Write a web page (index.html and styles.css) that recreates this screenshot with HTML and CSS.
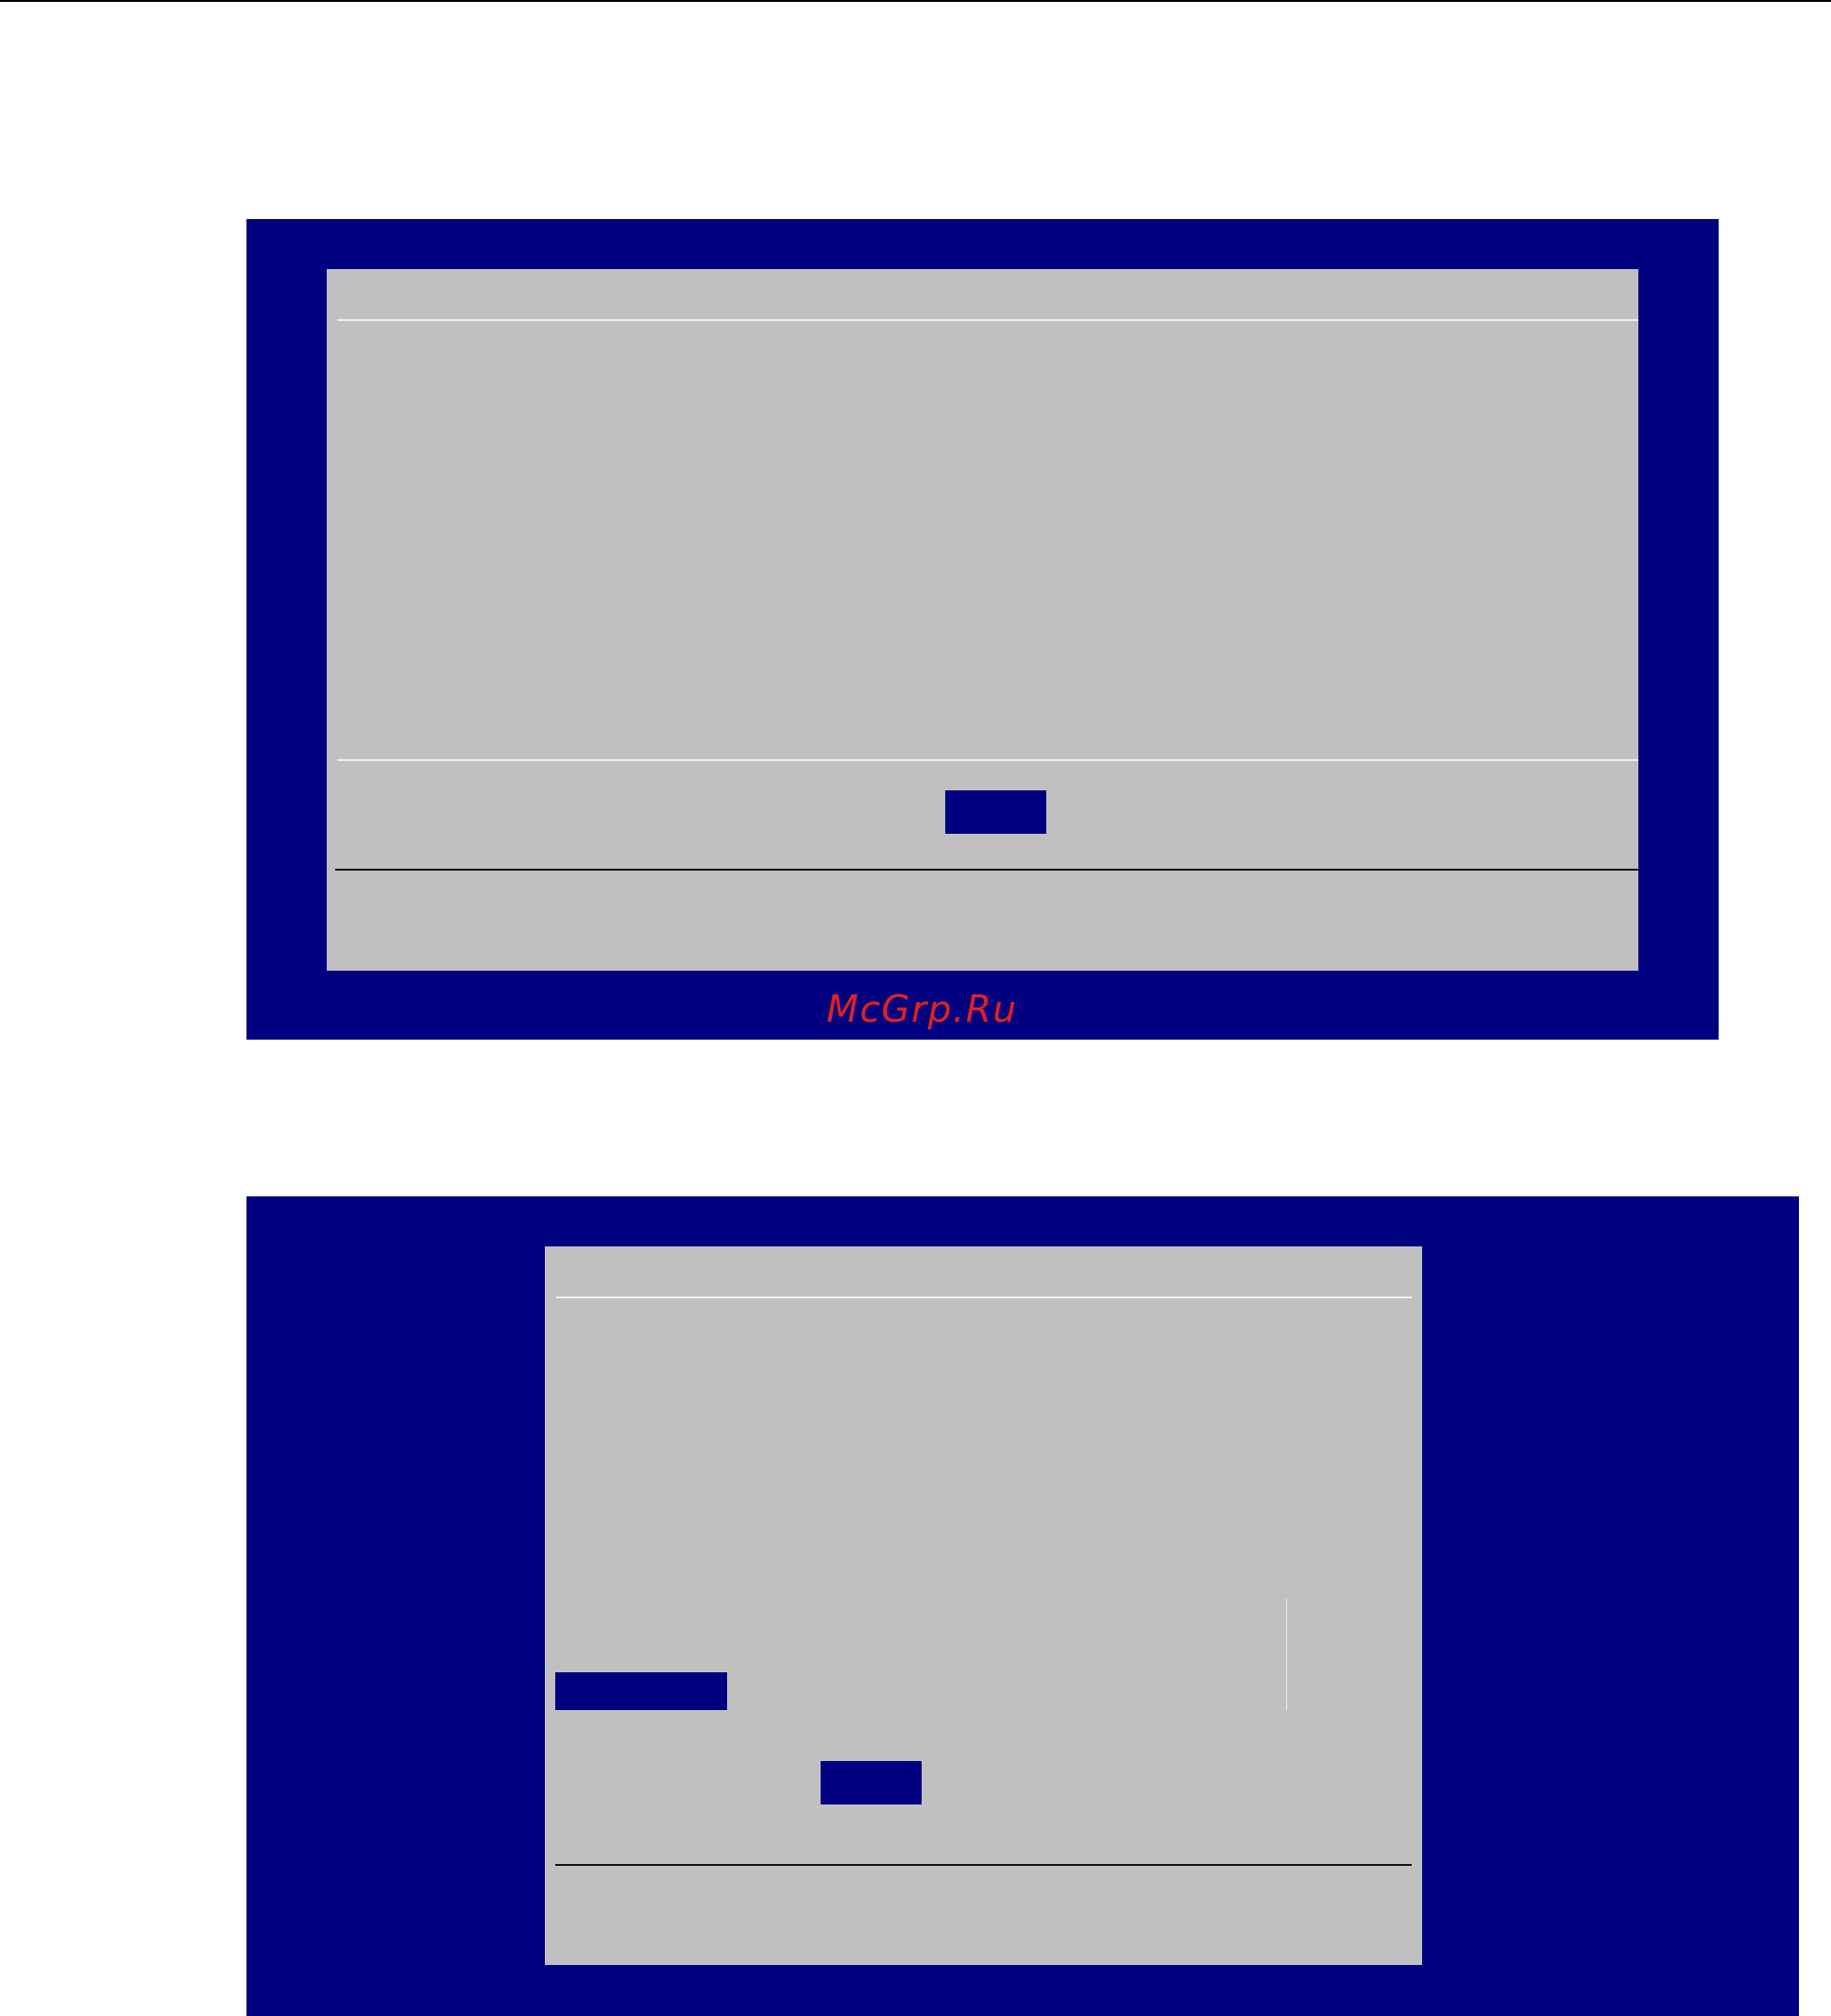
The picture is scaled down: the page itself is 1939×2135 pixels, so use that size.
FILE: index.html
```html
<!DOCTYPE html>
<html>
<head>
<meta charset="utf-8">
<link rel="stylesheet" href="styles.css">
</head>
<body>
<div class="topline"></div>

<section class="panel panel-one">
  <div class="dialog dialog-one">
    <div class="sep-light"></div>
    <div class="sep-light sep-lower"></div>
    <div class="btn btn-one"></div>
    <div class="sep-dark sep-dark-one"></div>
  </div>
  <div class="caption">McGrp.Ru</div>
</section>

<section class="panel panel-two">
  <div class="dialog dialog-two">
    <div class="sep-light sep-light-two"></div>
    <div class="field-row">
      <div class="field-sel"></div>
      <div class="vbar"></div>
    </div>
    <div class="btn btn-two"></div>
    <div class="sep-dark sep-dark-two"></div>
  </div>
</section>
</body>
</html>
```

FILE: styles.css
```css
html, body {
  margin: 0;
  padding: 0;
  background: #ffffff;
}
body {
  width: 1939px;
  height: 2135px;
  overflow: hidden;
  font-family: "DejaVu Sans", sans-serif;
}
.topline {
  height: 2px;
  background: #000000;
}
.panel {
  background: #000080;
  box-sizing: border-box;
  padding-top: 53px;
}
.panel-one {
  margin: 230px 0 0 261px;
  width: 1559px;
  height: 869px;
  padding-left: 85px;
}
.panel-two {
  margin: 166px 0 0 261px;
  width: 1644px;
  height: 868px;
  padding-left: 316px;
}
.dialog {
  background: #c0c0c0;
  box-sizing: border-box;
  padding-top: 53px;
  overflow: hidden;
}
.dialog-one {
  width: 1389px;
  height: 743px;
}
.dialog-two {
  width: 929px;
  height: 761px;
}
.sep-light {
  height: 2px;
  background: #eeeeee;
  margin-left: 11px;
}
.sep-lower {
  margin-top: 464px;
}
.sep-light-two {
  margin-right: 11px;
  margin-left: 12px;
}
.btn {
  width: 107px;
  height: 46px;
  background: #000080;
}
.btn-one {
  margin: 31px 0 0 655px;
}
.btn-two {
  margin: 54px 0 0 292px;
}
.sep-dark {
  height: 2px;
  background: #111111;
}
.sep-dark-one {
  margin: 37px 0 0 9px;
}
.sep-dark-two {
  margin: 63px 11px 0 11px;
}
.field-row {
  display: flex;
  align-items: flex-end;
  margin-top: 318px;
  height: 118px;
}
.field-sel {
  width: 182px;
  height: 40px;
  background: #000080;
  margin-left: 11px;
}
.vbar {
  width: 1px;
  height: 118px;
  background: #eeeeee;
  margin-left: 592px;
}
.caption {
  margin: 21px 0 0 529px;
  font-family: "DejaVu Sans", sans-serif;
  font-style: oblique;
  font-size: 39px;
  line-height: 39px;
  letter-spacing: 1.5px;
  color: #dd2222;
}
```
